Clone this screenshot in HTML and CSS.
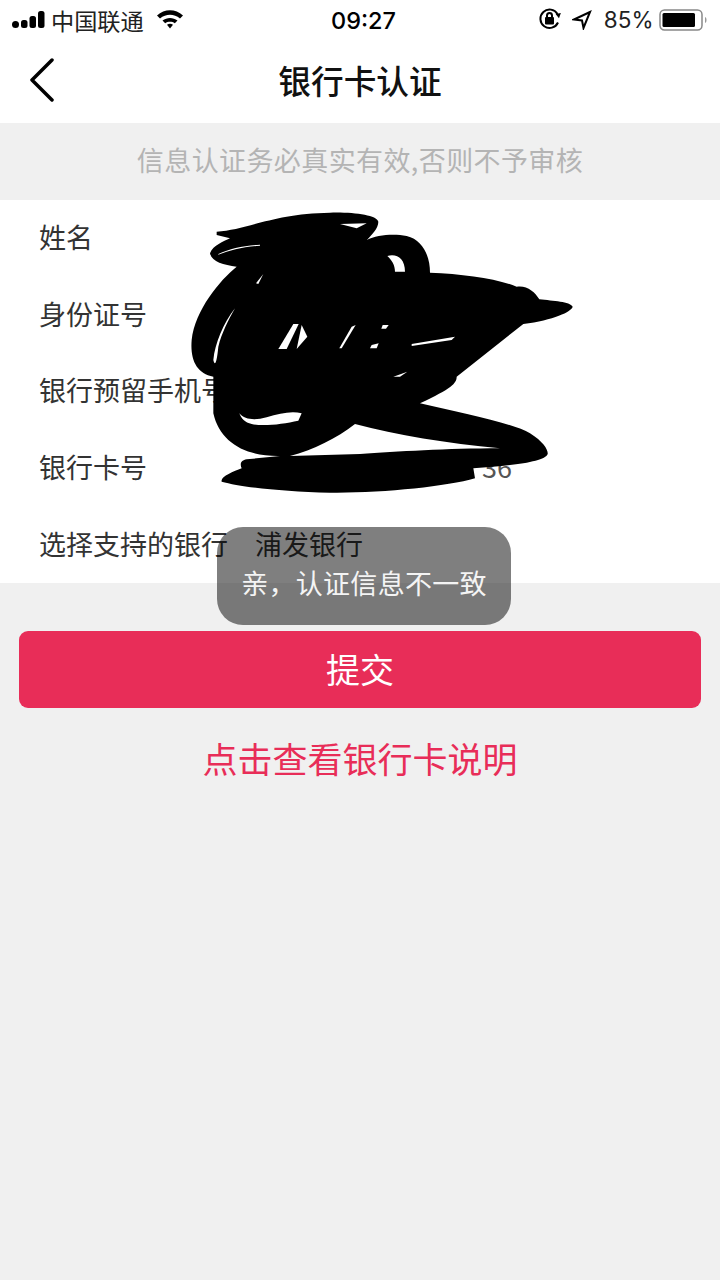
FILE: index.html
```html
<!DOCTYPE html>
<html lang="zh">
<head>
<meta charset="utf-8">
<title>银行卡认证</title>
<link rel="stylesheet" href="styles.css">
</head>
<body>
<div class="page">
  <div class="status">
    <div class="status-left">
      <svg class="signal" width="33" height="20" viewBox="0 0 33 20"><circle cx="3.500" cy="14.500" r="3.500"/><rect x="9" y="10" width="6.500" height="8" rx="2.500"/><rect x="17.500" y="6" width="6.500" height="12" rx="2.500"/><rect x="26" y="1" width="6.500" height="17" rx="2.500"/></svg>
      <span class="carrier">中国联通</span>
      <svg class="wifi" width="28" height="20" viewBox="0 0 28 20"><path d="M1 6.500C8.500 -0.500 19.500 -0.500 27 6.500L24 9.500C18 4.500 10 4.500 4 9.500Z"/><path d="M6.500 11.500C11 8 17 8 21.500 11.500L18.800 14.200C16 12.300 12 12.300 9.200 14.200Z"/><path d="M11 15.800C13 14.500 15 14.500 17 15.800L14 19.500Z"/></svg>
    </div>
    <span class="time">09:27</span>
    <div class="status-right">
      <svg class="lock" width="24" height="24" viewBox="0 0 24 24"><path class="thin" d="M20 15.500A9.200 9.200 0 1 1 19.500 7"/><path d="M17.500 7.500L22.500 5.500L21.500 11Z" transform="rotate(10 20 8)"/><rect x="7" y="10" width="9" height="7.500" rx="1"/><path class="thin" d="M9 10V8.500A2.500 2.500 0 0 1 14 8.500V10"/></svg>
      <svg class="arrow" width="20" height="20" viewBox="0 0 20 20"><path class="thin" d="M18 2L2 9.500L10 10.500L11.500 18Z"/></svg>
      <span class="battery-pct">85%</span>
      <svg class="battery" width="50" height="24" viewBox="0 0 50 24"><rect class="shell" x="1" y="2" width="42" height="20" rx="4.500"/><rect x="3.500" y="5" width="32.500" height="14" rx="1.500"/><path class="nub" d="M46 9C48 9.500 48 14.500 46 15Z"/></svg>
    </div>
  </div>
  <header class="nav">
    <svg class="back" width="28" height="46" viewBox="0 0 28 46"><path d="M23 2L3 22L23 42"/></svg>
    <h1 class="title">银行卡认证</h1>
  </header>
  <div class="notice">信息认证务必真实有效,否则不予审核</div>
  <section class="form">
    <div class="row"><span class="label">姓名</span></div>
    <div class="row"><span class="label">身份证号</span></div>
    <div class="row"><span class="label">银行预留手机号</span></div>
    <div class="row"><span class="label">银行卡号</span><span class="value value-end">36</span></div>
    <div class="row"><span class="label">选择支持的银行</span><span class="value">浦发银行</span></div>
  </section>
  <button class="submit" type="button">提交</button>
  <div class="help">点击查看银行卡说明</div>

  <svg class="scribble" width="400" height="300" viewBox="0 0 1200 900">
    <path d="M110 95C200 90 280 40 450 38C520 36 590 45 595 65C595 85 575 105 560 120C590 105 640 100 680 108C730 120 750 170 750 218C850 222 950 235 1010 260C1040 255 1065 275 1078 298C1120 303 1170 305 1178 320C1175 335 1120 360 1030 372L830 530C830 550 815 565 720 610C850 640 1000 670 1050 700C1090 725 1105 750 1103 762C1095 785 1000 797 880 805L885 835C800 860 600 880 450 878C300 875 180 860 125 845C120 830 160 815 185 805C178 790 185 780 200 778L300 768C200 770 120 730 100 640L100 530C50 520 30 480 35 420C45 330 120 240 170 200C130 195 95 185 90 160C100 135 130 125 150 115L110 105Z"/>
    <g class="holes">
      <path d="M525 672C650 705 800 730 960 745C800 745 650 755 540 762L330 768C400 750 470 715 525 672Z"/>
      <path d="M622 168C650 160 675 175 675 215L645 215C645 195 635 180 622 168Z"/>
      <path d="M165 325C130 370 105 430 100 480C105 500 110 490 115 440C125 400 145 360 165 325Z"/>
      <path d="M178 640C195 660 225 662 260 652C300 640 335 632 365 640L355 662C310 672 250 680 215 672C195 668 183 655 178 640Z"/>
      <path d="M340 372L356 372L320 447L295 447Z"/>
      <path d="M365 375L382 410L350 447Z"/>
      <path d="M608 375L626 375L618 386L604 386Z"/>
      <path d="M575 435L596 430L590 445L570 445Z"/>
      <path d="M695 432L825 410L815 420L695 438Z"/>
      <path d="M640 530L682 515L660 530Z"/>
      <path d="M480 72L560 70L530 85Z"/>
      <path d="M515 380L527 375L485 445L478 445Z"/>
      <path d="M228 250L250 222L235 252Z"/>
      <path d="M115 162C150 146 190 136 240 134L240 137C190 140 150 150 115 164Z"/>
    </g>
  </svg>

  <div class="toast">亲，认证信息不一致</div>
</div>
</body>
</html>
```
FILE: styles.css
```css
* { box-sizing: border-box; }
html, body { margin: 0; padding: 0; }
body { font-family: "Noto Sans CJK SC", "Liberation Sans", sans-serif; background: #f0f0f0; }
.page { position: relative; width: 720px; height: 1280px; overflow: hidden; background: #f0f0f0; color: #333; }

.status { position: relative; display: flex; align-items: center; justify-content: space-between; height: 40px; padding: 0 12px; background: #fff; color: #000; }
.status-left, .status-right { display: flex; align-items: center; }
.carrier { margin-left: 6px; font-size: 23.200px; line-height: 38px; color: #222; }
.wifi { margin-left: 12px; margin-top: -2px; }
.time { position: absolute; left: 7px; right: 0; text-align: center; font-family: "Inter", "Liberation Sans", sans-serif; font-size: 23.500px; font-weight: 500; line-height: 41px; }
.status-right { margin-right: -1px; }
.battery-pct { margin-left: 12px; font-family: "Inter", "Liberation Sans", sans-serif; font-size: 22.500px; color: #222; line-height: 40px; }
.battery { margin-left: 5.500px; margin-top: -1px; }
.arrow { margin-left: 10px; }
.lock { margin-top: -2px; }
.thin { fill: none; stroke: #000; stroke-width: 2; }
.shell { fill: none; stroke: #888; stroke-width: 1.500; }
.nub { fill: #999; }

.nav { position: relative; display: flex; align-items: center; justify-content: center; height: 83px; padding-bottom: 3px; background: #fff; }
.back { position: absolute; left: 29px; top: 18px; fill: none; stroke: #000; stroke-width: 3.500; stroke-linecap: round; stroke-linejoin: round; }
.title { margin: 0; font-size: 32.700px; font-weight: 500; color: #111; line-height: 1; }

.notice { height: 77px; line-height: 73px; text-align: center; font-size: 27px; letter-spacing: 0.400px; color: #b4b4b4; background: #f0f0f0; }

.form { background: #fff; height: 383px; display: flex; flex-direction: column; }
.row { flex: 1; display: flex; align-items: center; padding-left: 39px; padding-bottom: 3px; font-size: 27px; color: #333; white-space: nowrap; }
.label { width: 216px; flex: none; }
.value-end { width: 257px; text-align: right; color: #555; }

.submit { display: block; width: 682px; height: 77px; margin: 48px 0 0 19px; padding: 0 0 3px; border: 0; border-radius: 9px; background: #e82d58; color: #fff; font-family: inherit; font-size: 34px; }
.help { margin-top: 26px; text-align: center; font-size: 35px; line-height: 48px; color: #e82d58; }

.scribble { position: absolute; left: 180px; top: 200px; fill: #000; }
.holes { fill: #fff; }

.toast { position: absolute; left: 217px; top: 527px; width: 294px; height: 98px; padding-top: 36px; border-radius: 26px; background: rgba(0, 0, 0, 0.5); color: #f4f4f4; font-size: 27px; letter-spacing: 0.300px; line-height: 40px; text-align: center; }
```
